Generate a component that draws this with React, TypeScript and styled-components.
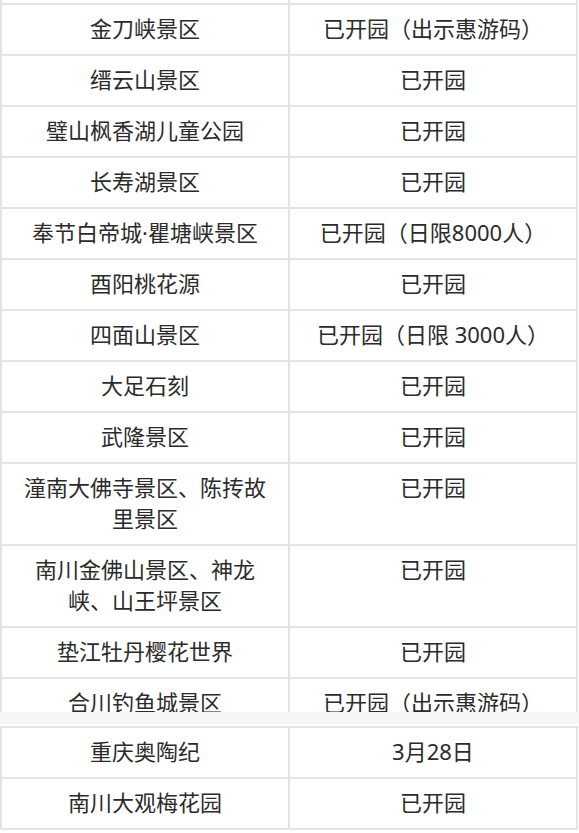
import styled, { createGlobalStyle } from "styled-components";
import React from 'react';

interface Spot{
    name: string;
    status: string;
}

const topSpots: Spot[] = [
    {name: '\u00a0', status: '\u00a0'},
    {name: '金刀峡景区', status: '已开园（出示惠游码）'},
    {name: '缙云山景区', status: '已开园'},
    {name: '璧山枫香湖儿童公园', status: '已开园'},
    {name: '长寿湖景区', status: '已开园'},
    {name: '奉节白帝城·瞿塘峡景区', status: '已开园（日限8000人）'},
    {name: '酉阳桃花源', status: '已开园'},
    {name: '四面山景区', status: '已开园（日限 3000人）'},
    {name: '大足石刻', status: '已开园'},
    {name: '武隆景区', status: '已开园'},
    {name: '潼南大佛寺景区、陈抟故里景区', status: '已开园'},
    {name: '南川金佛山景区、神龙峡、山王坪景区', status: '已开园'},
    {name: '垫江牡丹樱花世界', status: '已开园'},
    {name: '合川钓鱼城景区', status: '已开园（出示惠游码）'},
];

const bottomSpots: Spot[] = [
    {name: '重庆奥陶纪', status: '3月28日'},
    {name: '南川大观梅花园', status: '已开园'},
];

function SpotTable(props: {spots: Spot[]}){
    return(
        <Table>
            <colgroup>
                <col />
                <col />
            </colgroup>
            <tbody>
                {props.spots.map((spot, i) => (
                    <tr key={i}>
                        <Cell>{spot.name}</Cell>
                        <Cell>{spot.status}</Cell>
                    </tr>
                ))}
            </tbody>
        </Table>
    )
}

function App(){
    return(
        <Page>
            <GlobalStyle />
            <TopSection>
                <SpotTable spots={topSpots} />
            </TopSection>
            <SeamStrip />
            <BottomSection>
                <SpotTable spots={bottomSpots} />
            </BottomSection>
        </Page>
    )
}

const GlobalStyle = createGlobalStyle`
    html, body{
        margin: 0;
        padding: 0;
        background: #ffffff;
    }
`

const Page = styled.div`
    width: 579px;
    height: 833px;
    overflow: hidden;
    background: #ffffff;
    font-family: "Noto Sans", "Noto Sans CJK SC", sans-serif;
    color: #2b2b2b;
`

const TopSection = styled.div`
    height: 712px;
    overflow: hidden;
    & > table{
        margin-top: -48px;
    }
`

const SeamStrip = styled.div`
    height: 12px;
    margin-bottom: 2px;
    background: #f6f6f6;
`

const BottomSection = styled.div`
    display: block;
`

const Table = styled.table`
    width: 578px;
    table-layout: fixed;
    border-collapse: collapse;
    border: 2px solid #e4e4e4;
`

const Cell = styled.td`
    border: 2px solid #e4e4e4;
    padding: 8px 12px 10px;
    text-align: center;
    vertical-align: top;
    font-size: 22px;
    line-height: 31px;
    word-wrap: break-word;
`

export default App;
